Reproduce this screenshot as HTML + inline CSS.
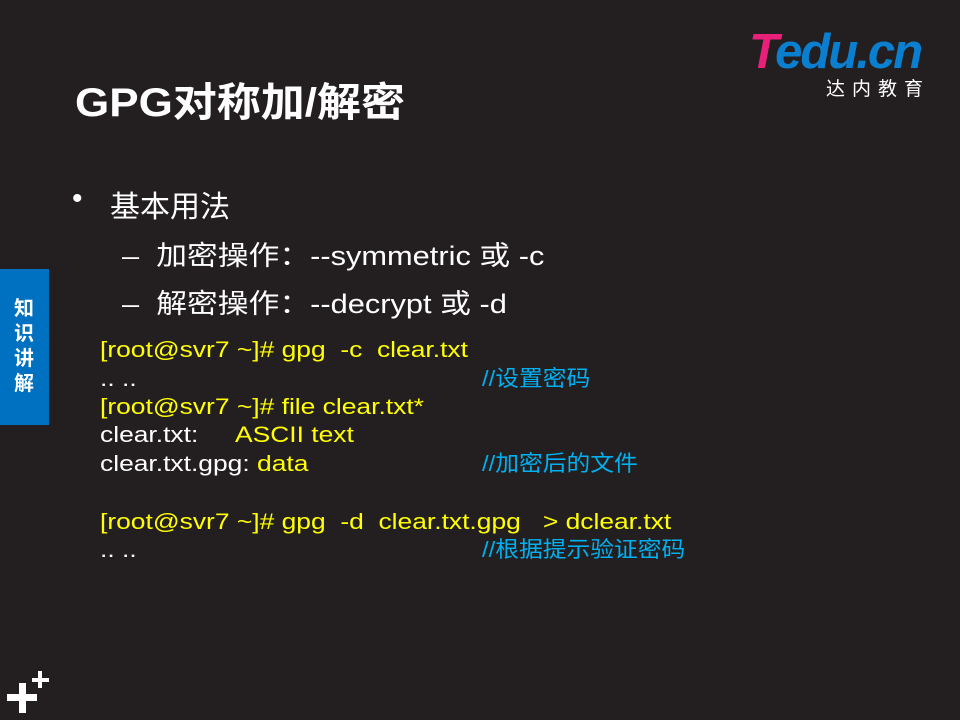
<!DOCTYPE html>
<html><head><meta charset="utf-8"><style>
body{margin:0;width:960px;height:720px;background:#231f20;position:relative;overflow:hidden;font-family:"Liberation Sans","Noto Sans CJK SC",sans-serif;color:#fff}
.a{position:absolute;white-space:nowrap;transform-origin:0 50%}
.t{left:75px;top:70px;font-size:40px;font-weight:bold;transform:scaleX(1.1)}
.b{font-size:30px}
.s{font-size:27px;transform:scaleX(1.14)}
.c{font-size:22px;line-height:28px;color:#ffff00;left:100px;transform:scaleX(1.2)}
.m{font-size:22px;line-height:28px;color:#00b0f0;left:482px;transform:scaleX(1.08)}
</style></head><body>
<div class="a t">GPG对称加/解密</div>
<div class="a b" style="left:72px;top:182px">•</div>
<div class="a b" style="left:110px;top:182px">基本用法</div>
<div class="a s" style="left:122px;top:234px">–&nbsp;&nbsp;加密操作：--symmetric 或 -c</div>
<div class="a s" style="left:122px;top:282px">–&nbsp;&nbsp;解密操作：--decrypt 或 -d</div>
<div class="a c" style="top:336px">[root@svr7 ~]# gpg &nbsp;-c &nbsp;clear.txt</div>
<div class="a c" style="top:365px;color:#fff">.. ..</div>
<div class="a m" style="top:365px">//设置密码</div>
<div class="a c" style="top:393px">[root@svr7 ~]# file clear.txt*</div>
<div class="a c" style="top:421px;color:#fff">clear.txt: &nbsp;&nbsp;&nbsp;&nbsp;<span style="color:#ffff00">ASCII text</span></div>
<div class="a c" style="top:450px;color:#fff">clear.txt.gpg: <span style="color:#ffff00">data</span></div>
<div class="a m" style="top:450px">//加密后的文件</div>
<div class="a c" style="top:508px">[root@svr7 ~]# gpg &nbsp;-d &nbsp;clear.txt.gpg &nbsp;&nbsp;&gt; dclear.txt</div>
<div class="a c" style="top:536px;color:#fff">.. ..</div>
<div class="a m" style="top:536px">//根据提示验证密码</div>
<div class="a" style="left:0;top:269px;width:49px;height:156px;background:#0070c0"></div>
<div class="a" style="left:12px;top:297px;width:24px;font-size:20px;font-weight:bold;line-height:25px;white-space:normal;text-align:center">知识讲解</div>
<div class="a" style="left:749px;top:24px;font-size:49px;font-weight:bold;font-style:italic;letter-spacing:-2px;color:#0a7fd0"><span style="color:#e8207a">T</span>edu.cn</div>
<div class="a" style="left:826px;top:74px;font-size:19px;letter-spacing:7px">达内教育</div>
<div class="a" style="left:7px;top:694px;width:30px;height:7px;background:#fff"></div>
<div class="a" style="left:19px;top:683px;width:7px;height:30px;background:#fff"></div>
<div class="a" style="left:32px;top:678px;width:17px;height:4px;background:#fff"></div>
<div class="a" style="left:38px;top:671px;width:4px;height:17px;background:#fff"></div>
</body></html>
